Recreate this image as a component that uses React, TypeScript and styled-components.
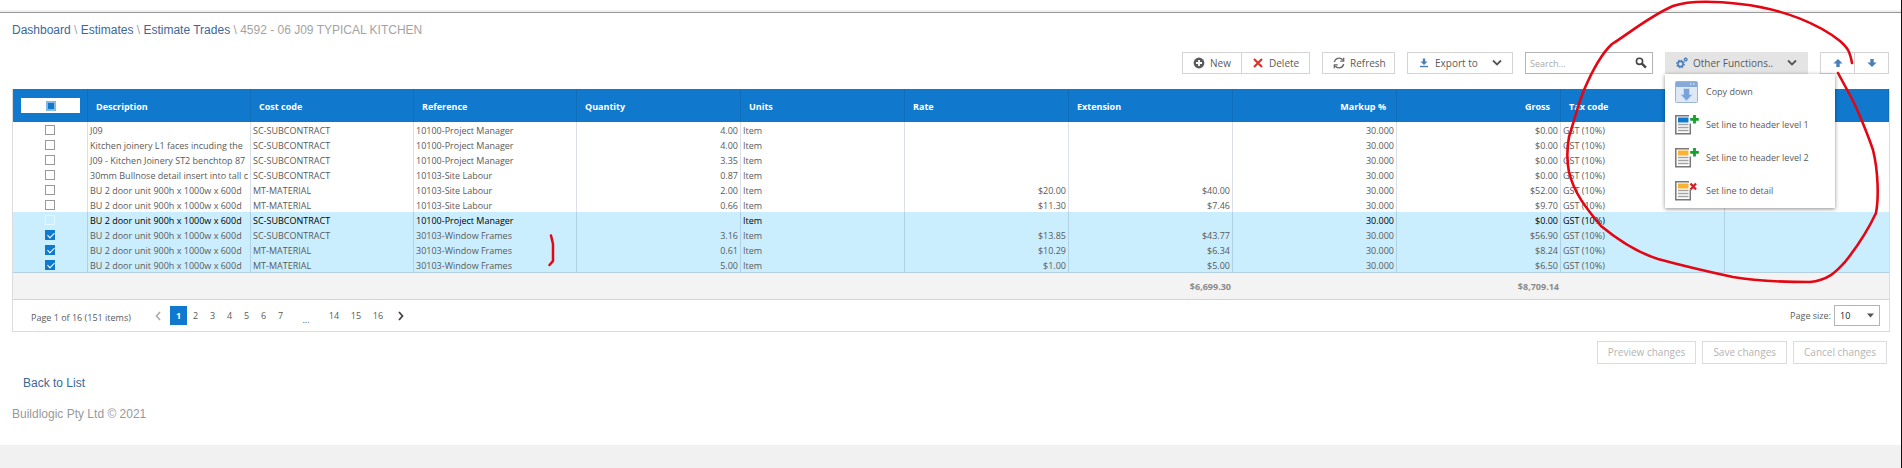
import React, { useEffect, useRef, useState } from 'react';
import styled, { createGlobalStyle, css } from 'styled-components';

const GlobalStyle = createGlobalStyle`
  * { box-sizing: border-box; }
  html { background: #f1f1f1; }
  body {
    margin: 0;
    font: 9px/15px "Open Sans", "Noto Sans", sans-serif;
    color: #5a5a5a;
  }
  button, input, select { font: inherit; color: inherit; }
  svg { flex-shrink: 0; }
`;

const Page = styled.div`
  position: relative;
  padding: 10px 11px 22px 12px;
  background: #fff;
  border-right: 1px solid #111;
  overflow: hidden;
`;

const Backdrop = styled.div`
  min-height: 100vh;
  background: #f1f1f1;
  border-right: 1px solid #111;
  & > ${Page} { margin-right: -1px; }
`;

const TopRule = styled.div`
  height: 3px;
  margin: 0 -11px 8px -12px;
  background: #f0f0f0;
  border-bottom: 1px solid #999;
`;

const Breadcrumb = styled.nav`
  font: 12px/18px "Liberation Sans", Arial, sans-serif;
  color: #a3a3a3;
`;

const Anchor = styled.a`
  color: #3d6796;
  text-decoration: none;
`;

const Toolbar = styled.div`
  display: flex;
  justify-content: flex-end;
  gap: 12px;
  height: 22px;
  margin: 13px 1px 15px 0;
  font-size: 10px;
`;

const ButtonGroup = styled.div`
  position: relative;
  display: flex;
`;

const ToolButton = styled.button<{ $width: number; $active?: boolean }>`
  display: flex;
  align-items: center;
  gap: 5px;
  width: ${p => p.$width}px;
  height: 22px;
  padding: 0 10px;
  border: 1px solid ${p => (p.$active ? '#e4e4e4' : '#d4d4d4')};
  background: ${p => (p.$active ? '#e4e4e4' : '#fff')};
  white-space: nowrap;
  & > .caret { margin-left: auto; }
`;

const JoinedButton = styled(ToolButton)`
  & + & { border-left: 0; }
`;

const IconButton = styled(JoinedButton)`
  justify-content: center;
  padding: 0;
`;

const SearchBox = styled.form`
  display: flex;
  align-items: center;
  width: 128px;
  border: 1px solid #b4b4b4;
  margin: 0;
  padding-right: 5px;
`;

const SearchInput = styled.input`
  flex: 1;
  min-width: 0;
  border: 0;
  padding: 0 4px;
  outline: 0;
  font-size: 9px;
  &::placeholder { color: #aaa; }
`;

const PlainButton = styled.button`
  display: flex;
  padding: 0;
  border: 0;
  background: none;
`;

const Menu = styled.ul`
  position: absolute;
  top: 22px;
  left: 0;
  z-index: 2;
  width: 170px;
  margin: 0;
  padding: 1px 0;
  list-style: none;
  background: #fff;
  font-size: 9px;
  box-shadow: 0 1px 4px rgba(0, 0, 0, 0.45);
`;

const MenuButton = styled.button`
  display: flex;
  align-items: center;
  gap: 7px;
  width: 100%;
  height: 33px;
  padding: 0 10px;
  border: 0;
  background: none;
  white-space: nowrap;
`;

const Grid = styled.div`
  border: solid #dcdcdc;
  border-width: 0 1px 1px;
`;

const Table = styled.table`
  width: 100%;
  table-layout: fixed;
  border-collapse: separate;
  border-spacing: 0;
`;

const Col = styled.col<{ $width?: number }>`
  ${p => p.$width && css`width: ${p.$width}px;`}
`;

const HeadCell = styled.th<{ $right?: boolean }>`
  height: 33px;
  padding: 2px 10px 0 8px;
  background: #1079ce;
  border-right: 1px solid #0f6dba;
  color: #fff;
  text-align: ${p => (p.$right ? 'right' : 'left')};
`;

const HeadCheckCell = styled(HeadCell)`
  padding: 0 7px 0 8px;
`;

const CheckPanel = styled.label`
  display: flex;
  align-items: center;
  justify-content: center;
  height: 15px;
  background: #fff;
`;

const Row = styled.tr<{ $tone?: 'selected' | 'focused' }>`
  background: ${p => (p.$tone ? '#cbeefe' : '#fff')};
  ${p => p.$tone === 'focused' && css`color: #000;`}
`;

const Cell = styled.td<{ $right?: boolean }>`
  height: 15px;
  padding: 2px 2px 0;
  line-height: 13px;
  border-right: 1px solid rgba(70, 100, 140, 0.2);
  overflow: hidden;
  white-space: nowrap;
  text-align: ${p => (p.$right ? 'right' : 'left')};
  &:last-child { border-right: 0; }
`;

const CheckCell = styled(Cell)`
  padding: 0;
  & > input { display: block; margin: 0 auto; }
`;

const Check = styled.input<{ $faint?: boolean }>`
  appearance: none;
  width: 10px;
  height: 10px;
  margin: 0;
  border: 1px solid ${p => (p.$faint ? '#e4f6ff' : '#999')};
  background: ${p => (p.$faint ? 'transparent' : '#fff')};
  &:checked {
    border-color: #1079ce;
    background: #1079ce;
  }
  &:checked::after {
    content: '';
    display: block;
    width: 3px;
    height: 6px;
    margin: 0 0 0 3px;
    border: solid #fff;
    border-width: 0 1px 1px 0;
    transform: rotate(45deg);
  }
  &:indeterminate {
    border: 2px solid #86b9e4;
    background: #1079ce;
  }
`;

const TotalCell = styled.td`
  height: 28px;
  padding: 0 2px;
  background: #f3f3f3;
  border: solid #d4d4d4;
  border-width: 1px 0;
  border-top-color: #b4cfdf;
  color: #8a8a8a;
  font-weight: 700;
  text-align: right;
`;

const Pager = styled.div`
  display: flex;
  align-items: center;
  height: 31px;
  padding: 0 9px 0 18px;
`;

const PageSummary = styled.span`
  min-width: 104px;
  padding-top: 4px;
`;

const PageList = styled.nav`
  display: flex;
  align-items: center;
  margin-left: 11px;
`;

const PageLink = styled.button<{ $wide?: boolean }>`
  width: ${p => (p.$wide ? 22 : 17)}px;
  height: 19px;
  padding: 0;
  border: 0;
  background: none;
  text-align: center;
  &[aria-current] {
    background: #1079ce;
    color: #fff;
    font-weight: 700;
  }
`;

const PageStep = styled(PlainButton)`
  width: 24px;
  justify-content: center;
`;

const Ellipsis = styled.span`
  width: 34px;
  padding-top: 8px;
  text-align: center;
`;

const PageSize = styled.label`
  display: flex;
  align-items: center;
  gap: 3px;
  margin-left: auto;
`;

const SelectFrame = styled.span`
  display: flex;
  align-items: center;
  width: 46px;
  height: 21px;
  padding-right: 5px;
  border: 1px solid #b4b4b4;
  color: #222;
`;

const Select = styled.select`
  appearance: none;
  flex: 1;
  min-width: 0;
  padding: 0 0 0 5px;
  border: 0;
  background: none;
`;

const Actions = styled.div`
  display: flex;
  justify-content: flex-end;
  gap: 6px;
  margin: 9px 3px 0 0;
  font-size: 10px;
`;

const ActionButton = styled.button`
  height: 23px;
  padding: 0 10px;
  border: 1px solid #dcdcdc;
  background: #fff;
  color: #b4b4b4;
`;

const Footer = styled.footer`
  margin-top: 10px;
  font: 12px/18px "Liberation Sans", Arial, sans-serif;
  color: #999;
  & > p { margin: 0 0 13px; }
  & > p:first-child { padding-left: 11px; }
  & > p:last-child { margin: 0; }
`;

const CircleMark = styled.svg`
  position: absolute;
  top: 0;
  right: -1px;
  z-index: 3;
  pointer-events: none;
`;

const BracketMark = styled.svg`
  position: absolute;
  top: 230px;
  left: 544px;
  pointer-events: none;
`;

const Chevron = () => (
  <svg className="caret" width="10" height="8" viewBox="0 0 10 8" aria-hidden="true">
    <path d="M1 1.5 5 5.5 9 1.5" fill="none" stroke="#555" strokeWidth="1.8" />
  </svg>
);

const PlusCircle = () => (
  <svg width="12" height="12" viewBox="0 0 12 12" aria-hidden="true">
    <circle cx="6" cy="6" r="5.4" fill="#5a5a5a" />
    <path d="M6 3v6M3 6h6" stroke="#fff" strokeWidth="1.8" />
  </svg>
);

const Cross = () => (
  <svg width="12" height="12" viewBox="0 0 12 12" aria-hidden="true">
    <path d="m2 2 8 8M10 2l-8 8" stroke="#d9332e" strokeWidth="2.2" />
  </svg>
);

const RefreshIcon = () => (
  <svg width="12" height="12" viewBox="0 0 12 12" fill="none" stroke="#666" strokeWidth="1.3" aria-hidden="true">
    <path d="M1.3 5A4.8 4.8 0 0 1 9.8 3M10.7 7A4.8 4.8 0 0 1 2.2 9" />
    <path d="M10.7.8v3.4H7.3M1.3 11.2V7.8h3.4" />
  </svg>
);

const ExportIcon = () => (
  <svg width="12" height="12" viewBox="0 0 12 12" fill="#4a7ebb" aria-hidden="true">
    <path d="M4.8 1.5h2.4v3h2.3L6 8 2.500 4.500h2.300z" />
    <path d="M2 8.8h8v1.4H2z" />
  </svg>
);

const SearchIcon = () => (
  <svg width="12" height="12" viewBox="0 0 12 12" fill="none" stroke="#444" aria-hidden="true">
    <circle cx="4.5" cy="4.3" r="3.1" strokeWidth="1.6" />
    <path d="m6.9 6.7 4 4" strokeWidth="2.4" />
  </svg>
);

const GearsIcon = () => (
  <svg width="12" height="12" viewBox="0 0 12 12" fill="none" stroke="#4a7ebb" aria-hidden="true">
    <circle cx="4.5" cy="7" r="2.6" strokeWidth="1.6" />
    <circle cx="4.5" cy="7" r="3.8" strokeWidth="1.2" strokeDasharray="1.5 1.48" />
    <circle cx="9.7" cy="2.5" r="1.2" strokeWidth="1.2" />
    <circle cx="9.7" cy="2.5" r="1.9" strokeWidth=".7" strokeDasharray=".8 .7" />
  </svg>
);

const FatArrow = ({ down }: { down?: boolean }) => (
  <svg width="10" height="10" viewBox="0 0 10 10" aria-hidden="true">
    <path d={down ? 'M3.3 1h3.4v3.4h2.9L5 9 .4 4.4h2.9z' : 'M3.3 9h3.4V5.6h2.9L5 1 .4 5.6h2.9z'} fill="#4a7ebb" />
  </svg>
);

const CopyDownIcon = () => (
  <svg width="24" height="24" viewBox="0 0 24 24" aria-hidden="true">
    <rect x=".5" y="1.5" width="22" height="21" rx="1" fill="#dfe9f6" stroke="#9db3d3" />
    <path d="M1 2h21v5H1z" fill="#86a9d8" />
    <path d="M15 4h1.5M18 4h1.5" stroke="#fff" />
    <path d="M8.500 8.500h6v6h3l-6 6.500-6-6.500h3z" fill="#76a3dc" stroke="#c4d7ee" />
  </svg>
);

const LineIcon = ({ band, mark }: { band: string; mark: 'add' | 'remove' }) => (
  <svg width="24" height="24" viewBox="0 0 24 24" fill="none" aria-hidden="true">
    <path d="M14 2.700H.8v18H15.300V10.500" stroke="#777" strokeWidth="1.5" />
    <path d="M3 4.500h10.500v5H3z" fill={band} />
    <path d="M3 11.500h10.500M3 14.500h10.500M3 17.500h10.500" stroke="#a2a2a2" strokeWidth="1.3" />
    {mark === 'add' ? (
      <path d="M19.500 2v8.600M15.200 6.300h8.600" stroke="#17a02c" strokeWidth="2.800" />
    ) : (
      <path d="m15.500 4.500 5.500 6M21 4.500l-5.500 6" stroke="#cf1f2c" strokeWidth="2.300" />
    )}
  </svg>
);

const BU = 'BU 2 door unit 900h x 1000w x 600d';
const SC = 'SC-SUBCONTRACT';
const MT = 'MT-MATERIAL';
const PM = '10100-Project Manager';
const SITE = '10103-Site Labour';
const WF = '30103-Window Frames';

type Line = [string, string, string, string, string, string, string];

const lines: Line[] = [
  ['J09', SC, PM, '4.00', '', '', '$0.00'],
  ['Kitchen joinery L1 faces incuding the', SC, PM, '4.00', '', '', '$0.00'],
  ['J09 - Kitchen Joinery ST2 benchtop 87', SC, PM, '3.35', '', '', '$0.00'],
  ['30mm Bullnose detail insert into tall c', SC, SITE, '0.87', '', '', '$0.00'],
  [BU, MT, SITE, '2.00', '$20.00', '$40.00', '$52.00'],
  [BU, MT, SITE, '0.66', '$11.30', '$7.46', '$9.70'],
  [BU, SC, PM, '', '', '', '$0.00'],
  [BU, SC, WF, '3.16', '$13.85', '$43.77', '$56.90'],
  [BU, MT, WF, '0.61', '$10.29', '$6.34', '$8.24'],
  [BU, MT, WF, '5.00', '$1.00', '$5.00', '$6.50'],
];

const FOCUSED = 6;

const headings = ['Description', 'Cost code', 'Reference', 'Quantity', 'Units', 'Rate', 'Extension', 'Markup %', 'Gross', 'Tax code', ''];

export default function App() {
  const [checked, setChecked] = useState<number[]>([7, 8, 9]);
  const allRef = useRef<HTMLInputElement>(null);
  const all = checked.length === lines.length;

  useEffect(() => {
    if (allRef.current) allRef.current.indeterminate = checked.length > 0 && !all;
  }, [checked, all]);

  const toggle = (i: number) =>
    setChecked(c => (c.includes(i) ? c.filter(x => x !== i) : [...c, i]));

  return (
    <Backdrop>
      <GlobalStyle />
      <Page>
        <TopRule />
        <Breadcrumb aria-label="Breadcrumb">
          <Anchor href="#dashboard">Dashboard</Anchor> \ <Anchor href="#estimates">Estimates</Anchor> \{' '}
          <Anchor href="#trades">Estimate Trades</Anchor> \ 4592 - 06 J09 TYPICAL KITCHEN
        </Breadcrumb>

        <Toolbar>
          <ButtonGroup>
            <JoinedButton $width={60}><PlusCircle />New</JoinedButton>
            <JoinedButton $width={68}><Cross />Delete</JoinedButton>
          </ButtonGroup>
          <ToolButton $width={73}><RefreshIcon />Refresh</ToolButton>
          <ToolButton $width={106}><ExportIcon />Export to<Chevron /></ToolButton>
          <SearchBox onSubmit={e => e.preventDefault()}>
            <SearchInput aria-label="Search" placeholder="Search..." />
            <PlainButton aria-label="Search"><SearchIcon /></PlainButton>
          </SearchBox>
          <ButtonGroup>
            <ToolButton $width={143} $active aria-expanded="true"><GearsIcon />Other Functions..<Chevron /></ToolButton>
            <Menu>
              <li><MenuButton><CopyDownIcon />Copy down</MenuButton></li>
              <li><MenuButton><LineIcon band="#1079ce" mark="add" />Set line to header level 1</MenuButton></li>
              <li><MenuButton><LineIcon band="#f9b233" mark="add" />Set line to header level 2</MenuButton></li>
              <li><MenuButton><LineIcon band="#f9b233" mark="remove" />Set line to detail</MenuButton></li>
            </Menu>
          </ButtonGroup>
          <ButtonGroup>
            <IconButton $width={35} aria-label="Move up"><FatArrow /></IconButton>
            <IconButton $width={34} aria-label="Move down"><FatArrow down /></IconButton>
          </ButtonGroup>
        </Toolbar>

        <Grid>
          <Table>
            <colgroup>
              <Col $width={75} />
              {headings.map((_, i) => <Col key={i} $width={i < 3 ? 163 : undefined} />)}
            </colgroup>
            <thead>
              <tr>
                <HeadCheckCell>
                  <CheckPanel>
                    <Check
                      type="checkbox"
                      ref={allRef}
                      aria-label="Select all"
                      checked={all}
                      onChange={() => setChecked(all ? [] : lines.map((_, i) => i))}
                    />
                  </CheckPanel>
                </HeadCheckCell>
                {headings.map((h, i) => (
                  <HeadCell key={i} $right={h === 'Markup %' || h === 'Gross'}>{h}</HeadCell>
                ))}
              </tr>
            </thead>
            <tbody>
              {lines.map(([desc, code, ref, qty, rate, ext, gross], i) => (
                <Row key={i} $tone={i === FOCUSED ? 'focused' : i > FOCUSED ? 'selected' : undefined}>
                  <CheckCell>
                    <Check
                      type="checkbox"
                      aria-label={`Select line ${i + 1}`}
                      $faint={i === FOCUSED}
                      checked={checked.includes(i)}
                      onChange={() => toggle(i)}
                    />
                  </CheckCell>
                  <Cell>{desc}</Cell>
                  <Cell>{code}</Cell>
                  <Cell>{ref}</Cell>
                  <Cell $right>{qty}</Cell>
                  <Cell>Item</Cell>
                  <Cell $right>{rate}</Cell>
                  <Cell $right>{ext}</Cell>
                  <Cell $right>30.000</Cell>
                  <Cell $right>{gross}</Cell>
                  <Cell>GST (10%)</Cell>
                  <Cell />
                </Row>
              ))}
            </tbody>
            <tfoot>
              <tr>
                <TotalCell colSpan={7} />
                <TotalCell>$6,699.30</TotalCell>
                <TotalCell />
                <TotalCell>$8,709.14</TotalCell>
                <TotalCell colSpan={2} />
              </tr>
            </tfoot>
          </Table>
          <Pager>
            <PageSummary>Page 1 of 16 (151 items)</PageSummary>
            <PageList aria-label="Pages">
              <PageStep aria-label="Previous page" disabled>
                <svg width="6" height="10" viewBox="0 0 6 10"><path d="M5 1 1.500 5 5 9" fill="none" stroke="#aaa" strokeWidth="1.600" /></svg>
              </PageStep>
              {[1, 2, 3, 4, 5, 6, 7].map(n => (
                <PageLink key={n} aria-current={n === 1 ? 'page' : undefined}>{n}</PageLink>
              ))}
              <Ellipsis>...</Ellipsis>
              {[14, 15, 16].map(n => <PageLink key={n} $wide>{n}</PageLink>)}
              <PageStep aria-label="Next page">
                <svg width="6" height="10" viewBox="0 0 6 10"><path d="M1 1 4.500 5 1 9" fill="none" stroke="#444" strokeWidth="1.800" /></svg>
              </PageStep>
            </PageList>
            <PageSize>
              Page size:
              <SelectFrame>
                <Select defaultValue="10">
                  <option>10</option>
                  <option>20</option>
                  <option>50</option>
                </Select>
                <svg width="7" height="5" viewBox="0 0 7 5" aria-hidden="true"><path d="M0 .5h7L3.500 4.500z" fill="#555" /></svg>
              </SelectFrame>
            </PageSize>
          </Pager>
        </Grid>

        <Actions>
          <ActionButton disabled>Preview changes</ActionButton>
          <ActionButton disabled>Save changes</ActionButton>
          <ActionButton disabled>Cancel changes</ActionButton>
        </Actions>

        <Footer>
          <p><Anchor href="#list">Back to List</Anchor></p>
          <p>Buildlogic Pty Ltd © 2021</p>
        </Footer>

        <CircleMark width="402" height="300" viewBox="0 0 402 300" fill="none" aria-hidden="true">
          <path
            d="M352 63C350 52 348 48 340 41C320 25 285 9 240 4C215 1 190 0 173 6C150 16 128 34 112 44C100 55 90 76 84 90C78 105 72 128 69 137C67 148 67 162 69 172C74 193 86 208 101 226C118 240 136 252 158 259C180 265 205 271 233 277C255 281 285 282 310 282C330 280 337 270 345 262C357 247 368 230 376 213C379 197 378 170 373 150C368 135 357 108 351 97L338 73"
            stroke="#e30613"
            strokeWidth="2.600"
            strokeLinecap="round"
          />
        </CircleMark>
        <BracketMark width="16" height="40" viewBox="0 0 16 40" fill="none" aria-hidden="true">
          <path d="M7 5.500 9 14V31L5.500 35" stroke="#e30613" strokeWidth="2.500" strokeLinecap="round" strokeLinejoin="round" />
        </BracketMark>
      </Page>
    </Backdrop>
  );
}
